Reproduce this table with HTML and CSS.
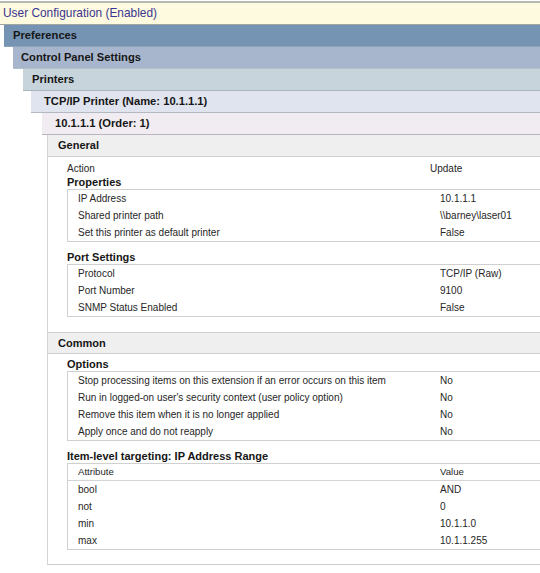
FILE: index.html
```html
<!DOCTYPE html>
<html>
<head>
<meta charset="utf-8">
<link rel="stylesheet" href="styles.css">
</head>
<body>
<div class="tree">
  <div class="band b0">User Configuration (Enabled)</div>
  <div class="nest n1">
    <div class="band b1">Preferences</div>
    <div class="nest n2">
      <div class="band b2">Control Panel Settings</div>
      <div class="nest n3">
        <div class="band b3">Printers</div>
        <div class="nest n4">
          <div class="band b4">TCP/IP Printer (Name: 10.1.1.1)</div>
          <div class="nest n5">
            <div class="band b5">10.1.1.1 (Order: 1)</div>
            <div class="panel">
              <section class="sec sec-general">
                <div class="sec-head">General</div>
                <div class="sec-body">
                  <div class="action"><span>Action</span><span>Update</span></div>
                  <div class="group-title">Properties</div>
                  <div class="box">
                    <div class="row"><span>IP Address</span><span>10.1.1.1</span></div>
                    <div class="row"><span>Shared printer path</span><span>\\barney\laser01</span></div>
                    <div class="row"><span>Set this printer as default printer</span><span>False</span></div>
                  </div>
                  <div class="group-title spaced">Port Settings</div>
                  <div class="box">
                    <div class="row"><span>Protocol</span><span>TCP/IP (Raw)</span></div>
                    <div class="row"><span>Port Number</span><span>9100</span></div>
                    <div class="row"><span>SNMP Status Enabled</span><span>False</span></div>
                  </div>
                </div>
              </section>
              <section class="sec sec-common">
                <div class="sec-head">Common</div>
                <div class="sec-body">
                  <div class="group-title">Options</div>
                  <div class="box">
                    <div class="row"><span>Stop processing items on this extension if an error occurs on this item</span><span>No</span></div>
                    <div class="row"><span>Run in logged-on user's security context (user policy option)</span><span>No</span></div>
                    <div class="row"><span>Remove this item when it is no longer applied</span><span>No</span></div>
                    <div class="row"><span>Apply once and do not reapply</span><span>No</span></div>
                  </div>
                  <div class="group-title spaced2">Item-level targeting: IP Address Range</div>
                  <div class="box">
                    <div class="row head"><span>Attribute</span><span>Value</span></div>
                    <div class="row"><span>bool</span><span>AND</span></div>
                    <div class="row"><span>not</span><span>0</span></div>
                    <div class="row"><span>min</span><span>10.1.1.0</span></div>
                    <div class="row"><span>max</span><span>10.1.1.255</span></div>
                  </div>
                </div>
              </section>
            </div>
          </div>
        </div>
      </div>
    </div>
  </div>
</div>
</body>
</html>
```

FILE: styles.css
```css
html, body {
  margin: 0;
  padding: 0;
  background: #ffffff;
}
body {
  font-family: "Liberation Sans", Arial, sans-serif;
  color: #262626;
  overflow: hidden;
}
.tree {
  padding-top: 1px;
}
.band {
  height: 21px;
  line-height: 21px;
  font-size: 11.2px;
  font-weight: bold;
  color: #161616;
  white-space: nowrap;
  border-bottom: 1px solid #a9b0b8;
}
.b0 {
  border-top: 2px solid #b4b9b4;
  background: #fefadf;
  color: #3a3590;
  font-weight: normal;
  font-size: 11.9px;
  padding-left: 3px;
  border-bottom-color: #9fa69f;
}
.b1 { background: #7593b3; padding-left: 9px; border-bottom-color: #8fa3bb; }
.b2 { background: #a7b6cc; padding-left: 8px; border-bottom-color: #b3bfcc; }
.b3 { background: #c8d4dc; padding-left: 9px; border-bottom-color: #aab4bc; }
.b4 { background: #dfe4ee; padding-left: 13px; border-bottom-color: #b4b8c0; }
.b5 { background: #f0ecf1; padding-left: 13px; border-bottom-color: #b8b6bb; }

.n1 { padding-left: 4px; }
.n2 { padding-left: 9px; }
.n3 { padding-left: 10px; }
.n4 { padding-left: 8px; }
.n5 { padding-left: 11px; }

.panel {
  margin-left: 5px;
  border-left: 1px solid #d4d4d4;
  border-bottom: 1px solid #cccccc;
}
.sec-head {
  height: 21px;
  line-height: 21px;
  background: #efefef;
  border-bottom: 1px solid #d2d2d2;
  padding-left: 10px;
  font-size: 11px;
  font-weight: bold;
  color: #161616;
}
.sec-common {
  border-top: 1px solid #d0d0d0;
}
.sec-common .sec-head {
  height: 20px;
  line-height: 20px;
}
.sec-body {
  padding-left: 19px;
}
.sec-general .sec-body {
  padding-top: 5px;
  padding-bottom: 15px;
}
.sec-common .sec-body {
  padding-top: 4px;
  padding-bottom: 14px;
}
.action {
  display: grid;
  grid-template-columns: 363px 1fr;
  font-size: 10px;
  line-height: 14px;
}
.group-title {
  font-size: 11px;
  font-weight: bold;
  line-height: 13px;
  color: #161616;
  white-space: nowrap;
}
.group-title.spaced { margin-top: 9px; }
.group-title.spaced2 { margin-top: 9px; }
.box {
  border: 1px solid #d0d0d0;
  border-right: none;
}
.row {
  display: grid;
  grid-template-columns: 362px 1fr;
  padding-left: 10px;
  height: 17px;
  line-height: 17px;
  font-size: 10px;
  white-space: nowrap;
}
.row.head {
  height: 16px;
  line-height: 16px;
  font-size: 9.6px;
  border-bottom: 1px solid #d4d4d4;
}
```
